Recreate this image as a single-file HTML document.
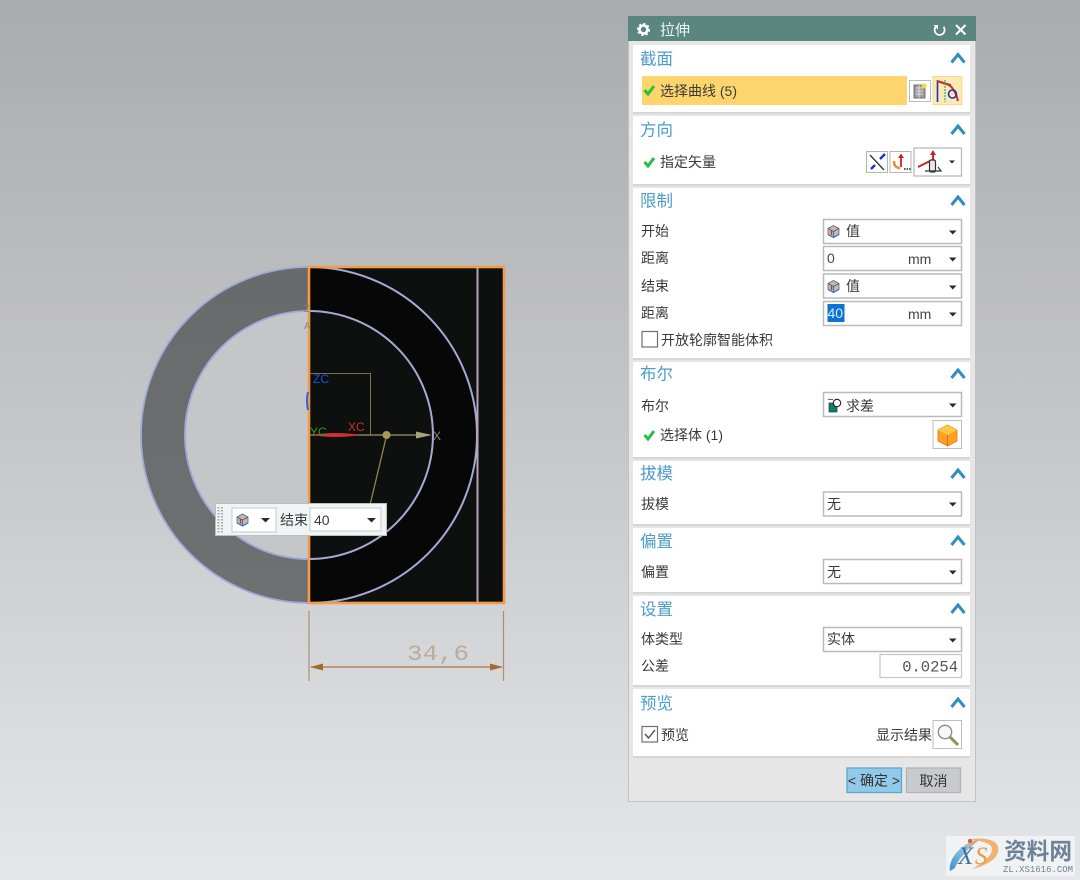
<!DOCTYPE html>
<html><head><meta charset="utf-8">
<style>
html,body{margin:0;padding:0;width:1080px;height:880px;overflow:hidden}
svg{display:block;filter:blur(.35px)}
text{font-family:"Liberation Sans","Noto Sans CJK SC",sans-serif}
.h{font-size:16.500px;fill:#4d9cc9}
.l{font-size:14px;fill:#3a3a3a}
.v{font-size:14px;fill:#3a3a3a}
.dd{fill:#fff;stroke:#b9bbbb;stroke-width:1.5}
.ar{fill:#2a2a2a}
.sec{fill:#fff}
.sh{fill:#d6d6d6}
.ch{fill:none;stroke:#2f8fc0;stroke-width:3}
.ck{fill:none;stroke:#28c040;stroke-width:3}
</style></head><body>
<svg width="1080" height="880" viewBox="0 0 1080 880" xmlns="http://www.w3.org/2000/svg">
<defs>
<linearGradient id="bg" x1="0" y1="0" x2="0" y2="1"><stop offset="0" stop-color="#aaabad"/><stop offset="0.5" stop-color="#c6c7ca"/><stop offset="1" stop-color="#e4e6e9"/></linearGradient>
<linearGradient id="ring" x1="0" y1="0" x2="0" y2="1"><stop offset="0" stop-color="#686a6b"/><stop offset="1" stop-color="#6f7072"/></linearGradient>
<linearGradient id="lg" x1="0" y1="1" x2="1" y2="0"><stop offset="0" stop-color="#3f8fd0"/><stop offset="0.6" stop-color="#8fc4e4"/><stop offset="1" stop-color="#f0a050"/></linearGradient>
<g id="cube"><path d="M0 3.500L5.500 0.500L11 3.500V9.500L5.500 12.500L0 9.500Z" fill="#b9bbbd" stroke="#666" stroke-width=".8"/><path d="M0 3.500L5.500 6.500L11 3.500M5.500 6.500V12.500" fill="none" stroke="#555" stroke-width=".8"/><path d="M0 9.500L5.500 12.500L11 9.500" fill="none" stroke="#3a70d0" stroke-width="1.200"/><path d="M3.500 6V10" stroke="#d03030" stroke-width="1.300"/></g>
</defs>
<rect width="1080" height="880" fill="url(#bg)"/>

<!-- left half ring -->
<path d="M309 267A168 168 0 0 0 309 603V559A124 124 0 0 1 309 311Z" fill="url(#ring)" stroke="#a0a8d8" stroke-width="1.800"/>
<path d="M309 311A124 124 0 0 0 309 559Z" fill="#c5c6c9"/>
<path d="M309 311A124 124 0 0 0 309 559" fill="none" stroke="#a0a8d8" stroke-width="1.800"/>
<!-- black rect -->
<rect x="309" y="267" width="195" height="336" fill="#0e0f0f"/>
<path d="M309 267A168 168 0 0 1 309 603Z" fill="#070707"/>
<path d="M309 311A124 124 0 0 1 309 559Z" fill="#0e1010"/>
<path d="M309 267A168 168 0 0 1 309 603" fill="none" stroke="#a6a9d4" stroke-width="2"/>
<path d="M309 311A124 124 0 0 1 309 559" fill="none" stroke="#a6a9d4" stroke-width="2"/>
<line x1="477.500" y1="268" x2="477.500" y2="603" stroke="#b8a4b8" stroke-width="2"/>
<rect x="309" y="267" width="195" height="336" fill="none" stroke="#f39c48" stroke-width="2.600"/>
<!-- axes -->
<path d="M310 373.500H370.500V435" fill="none" stroke="#77714f" stroke-width="1"/>
<line x1="310" y1="435" x2="420" y2="435" stroke="#857e58" stroke-width="1.500"/>
<path d="M416 431.500L432 435L416 438.500Z" fill="#a8a27a"/>
<path d="M312 435Q335 431 360 435Q335 439 312 435Z" fill="#d03030"/>
<circle cx="386.500" cy="435" r="4" fill="#a99a50"/>
<line x1="386" y1="438" x2="370" y2="505" stroke="#8f8450" stroke-width="1.300"/>
<path d="M308 392Q306 400 308 410" fill="none" stroke="#3060d8" stroke-width="2"/>
<text x="313" y="383" font-size="12" fill="#1a50e0">ZC</text>
<text x="310" y="436" font-size="12" fill="#2a9a30">YC</text>
<text x="348" y="431" font-size="12" fill="#c83030">XC</text>
<text x="433" y="440" font-size="12" fill="#8a8566">X</text>
<text x="304" y="312" font-size="10" fill="#8a8a70">Z</text>
<text x="304" y="329" font-size="10" fill="#8a8a70">A</text>

<!-- floating toolbar -->
<rect x="215.500" y="503.500" width="171" height="32" fill="#eff4f4" stroke="#bcbebe"/>
<path d="M218.500 507V534M222 507V534" stroke="#aaa" stroke-width="2" stroke-dasharray="1.500 1.500"/>
<rect x="232" y="508" width="44" height="24" fill="#fff" stroke="#c6c8c8"/>
<use href="#cube" x="237" y="513.500"/>
<path d="M261 518H270L265.500 522.500Z" class="ar"/>
<text x="280" y="525" class="v">结束</text>
<rect x="310" y="508" width="71" height="23" fill="#fff" stroke="#c6c8c8"/>
<text x="314" y="525" font-size="14" fill="#3a3a3a">40</text>
<path d="M367 518H376L371.500 522.500Z" class="ar"/>

<!-- dimension -->
<g stroke="#b08f6f" stroke-width="1.200" fill="none"><line x1="309" y1="611" x2="309" y2="681"/><line x1="503.500" y1="611" x2="503.500" y2="681"/></g>
<line x1="311" y1="667" x2="502" y2="667" stroke="#a87a48" stroke-width="1.300"/>
<path d="M310 667L323 663.500V670.500Z" fill="#a06a30"/><path d="M503 667L490 663.500V670.500Z" fill="#a06a30"/>
<text x="407" y="660" style="font-family:'Liberation Mono',monospace" font-size="22" fill="#bcab9c" textLength="62" lengthAdjust="spacingAndGlyphs">34,6</text>

<!-- dialog -->
<rect x="628.500" y="16.500" width="347" height="785" fill="#e6e6e6" stroke="#c2c2c2"/>
<rect x="628" y="16" width="348" height="25" fill="#5b8680"/>
<g transform="translate(643.500 29.500)"><circle r="4" fill="none" stroke="#fff" stroke-width="2.600"/><circle r="5.700" fill="none" stroke="#fff" stroke-width="1.700" stroke-dasharray="2.200 2.200"/></g>
<text x="660" y="35" font-size="15" fill="#eef4f3">拉伸</text>
<path d="M936 26.500A5 5 0 1 0 943.500 26.800" fill="none" stroke="#fff" stroke-width="1.700"/><path d="M933.500 25H938V29.500Z" fill="#fff"/>
<path d="M956 25L965.500 34.500M965.500 25L956 34.500" stroke="#fff" stroke-width="2"/>

<!-- sections -->
<g class="sh"><rect x="633" y="112" width="337" height="2"/><rect x="633" y="184" width="337" height="2"/><rect x="633" y="358" width="337" height="2"/><rect x="633" y="457" width="337" height="2"/><rect x="633" y="524" width="337" height="2"/><rect x="633" y="592" width="337" height="2"/><rect x="633" y="685" width="337" height="2"/><rect x="633" y="756" width="337" height="2"/></g>
<rect class="sec" x="633" y="45" width="337" height="67"/>
<rect class="sec" x="633" y="116" width="337" height="68"/>
<rect class="sec" x="633" y="188" width="337" height="170"/>
<rect class="sec" x="633" y="362" width="337" height="95"/>
<rect class="sec" x="633" y="461" width="337" height="63"/>
<rect class="sec" x="633" y="528" width="337" height="64"/>
<rect class="sec" x="633" y="596" width="337" height="89"/>
<rect class="sec" x="633" y="689" width="337" height="67"/>

<text class="h" x="640" y="64.500">截面</text><text class="h" x="640" y="135.500">方向</text><text class="h" x="640" y="206.500">限制</text><text class="h" x="640" y="379.500">布尔</text><text class="h" x="640" y="479">拔模</text><text class="h" x="640" y="547">偏置</text><text class="h" x="640" y="615">设置</text><text class="h" x="640" y="709">预览</text>
<g class="ch"><path d="M951.500 62.500L958 54.500L964.500 62.500"/><path d="M951.500 134L958 126L964.500 134"/><path d="M951.500 205L958 197L964.500 205"/><path d="M951.500 378L958 370L964.500 378"/><path d="M951.500 478L958 470L964.500 478"/><path d="M951.500 545L958 537L964.500 545"/><path d="M951.500 613L958 605L964.500 613"/><path d="M951.500 707L958 699L964.500 707"/></g>

<!-- 截面 -->
<rect x="642" y="76" width="265" height="29" fill="#fdd56c"/>
<path class="ck" d="M644.500 90L648 94L654 86"/>
<text class="l" x="660" y="96">选择曲线 (5)</text>
<rect x="909.500" y="80.500" width="21" height="21" fill="#fff" stroke="#bbb"/>
<rect x="914" y="85" width="11" height="13" fill="#9a9f9f" stroke="#555" stroke-width=".8"/><path d="M916 88H923M916 91H923M916 94H923M919 85V98" stroke="#eee" stroke-width=".8"/><circle cx="924" cy="86" r="2.500" fill="#f0d840"/>
<rect x="933" y="76.500" width="29" height="28" fill="#fbeab4" stroke="#fcd98a"/>
<path d="M937.500 102V81L951 85" fill="none" stroke="#2030c0" stroke-width="1.600"/>
<path d="M937 81L949 85Q955 89 958 101" fill="none" stroke="#d03030" stroke-width="2"/>
<line x1="945" y1="80" x2="945" y2="102" stroke="#40a080" stroke-width="1.200" stroke-dasharray="2 1"/>
<circle cx="952.500" cy="94" r="4" fill="none" stroke="#2030c0" stroke-width="1.600"/>

<!-- 方向 -->
<path class="ck" d="M644.500 162L648 166L654 158"/>
<text class="l" x="660" y="167">指定矢量</text>
<rect x="866.500" y="151.500" width="21" height="21" fill="#fff" stroke="#b5b5b5"/>
<path d="M870 155L884 170" stroke="#333" stroke-width="1.300"/><path d="M871 169L875 165M880 159L885 154" stroke="#1a30d0" stroke-width="2.400"/>
<rect x="890" y="151.500" width="21" height="21" fill="#fff" stroke="#b5b5b5"/>
<path d="M901 167V157" stroke="#d02020" stroke-width="1.800"/><path d="M898 158L901 153.500L904 158Z" fill="#d02020"/><path d="M894 161Q894 168 900 168" fill="none" stroke="#e88a30" stroke-width="2.400"/><path d="M904 169H911" stroke="#222" stroke-width="1.600" stroke-dasharray="1.500 1"/>
<rect x="914" y="148" width="47.500" height="28" fill="#fff" stroke="#b9bbbb" stroke-width="1.300"/>
<path d="M918 167L930 161" stroke="#d02020" stroke-width="2"/><path d="M933 164V153" stroke="#d02020" stroke-width="2"/><path d="M930 155L933 150L936 155Z" fill="#d02020"/>
<rect x="929.500" y="160" width="6" height="12" rx="1.500" fill="#e8e8e8" stroke="#333" stroke-width="1.200"/><path d="M925 171H941L938 167" fill="none" stroke="#333" stroke-width="1.200"/>
<path class="ar" d="M949 160.500H955L952 163.500Z"/>

<!-- 限制 -->
<text class="l" x="641" y="236">开始</text><text class="l" x="641" y="263">距离</text><text class="l" x="641" y="291">结束</text><text class="l" x="641" y="318">距离</text>
<rect class="dd" x="823.500" y="219.500" width="138" height="24"/><use href="#cube" x="828" y="225"/><text class="v" x="846" y="236">值</text><path class="ar" d="M949 230.500H956.500L952.750 234.500Z"/>
<rect class="dd" x="823.500" y="246.500" width="138" height="24"/><text x="827" y="263" font-size="14" fill="#444">0</text><text x="908" y="264" font-size="14" fill="#444">mm</text><path class="ar" d="M949 257.500H956.500L952.750 261.500Z"/>
<rect class="dd" x="823.500" y="274" width="138" height="24"/><use href="#cube" x="828" y="280"/><text class="v" x="846" y="291">值</text><path class="ar" d="M949 285.500H956.500L952.750 289.500Z"/>
<rect class="dd" x="823.500" y="301.500" width="138" height="24"/><rect x="827.500" y="304" width="17" height="18" fill="#0a74d0"/><text x="827.500" y="318" font-size="14" fill="#d8ecfb">40</text><text x="908" y="319" font-size="14" fill="#444">mm</text><path class="ar" d="M949 312.500H956.500L952.750 316.500Z"/>
<rect x="642" y="331.500" width="15.500" height="15.500" fill="#fff" stroke="#707070" stroke-width="1.200"/>
<text class="l" x="661" y="345">开放轮廓智能体积</text>

<!-- 布尔 -->
<text class="l" x="641" y="411">布尔</text>
<rect class="dd" x="823.500" y="392.500" width="138" height="24"/>
<path d="M828 399.500H833" stroke="#e03030" stroke-width="1"/><rect x="829" y="403" width="8" height="9" fill="#167a6a" stroke="#0b4a40" stroke-width=".7"/><circle cx="837" cy="403" r="3.700" fill="#fff" stroke="#222" stroke-width="1.100"/>
<text class="v" x="846" y="411">求差</text><path class="ar" d="M949 403.500H956.500L952.750 407.500Z"/>
<path class="ck" d="M644.500 435L648 439L654 431"/>
<text class="l" x="660" y="440">选择体 (1)</text>
<rect x="933" y="420.500" width="28.500" height="28" fill="#fff" stroke="#bdbdbd"/>
<path d="M947.500 425L957 430V441L947.500 446L938 441V430Z" fill="#fba31e" stroke="#f07020" stroke-width=".8"/><path d="M938 430L947.500 435L957 430L947.500 425Z" fill="#fdc848"/><path d="M947.500 435V446" stroke="#e86a18" stroke-width="1"/>

<!-- 拔模 / 偏置 / 设置 -->
<text class="l" x="641" y="509">拔模</text><rect class="dd" x="823.500" y="492" width="138" height="24"/><text class="v" x="827" y="509">无</text><path class="ar" d="M949 502.500H956.500L952.750 506.500Z"/>
<text class="l" x="641" y="577">偏置</text><rect class="dd" x="823.500" y="559.500" width="138" height="24"/><text class="v" x="827" y="577">无</text><path class="ar" d="M949 570.500H956.500L952.750 574.500Z"/>
<text class="l" x="641" y="644">体类型</text><rect class="dd" x="823.500" y="627.500" width="138" height="24"/><text class="v" x="827" y="644">实体</text><path class="ar" d="M949 638.500H956.500L952.750 642.500Z"/>
<text class="l" x="641" y="671">公差</text><rect x="880" y="654.500" width="81.500" height="23" fill="#fff" stroke="#c4c6c6" stroke-width="1.200"/>
<text x="958" y="671.500" text-anchor="end" font-size="15.500" fill="#555" style="font-family:'Liberation Mono',monospace">0.0254</text>

<!-- 预览 -->
<rect x="642" y="726.500" width="15.500" height="15.500" fill="#fff" stroke="#707070" stroke-width="1.200"/>
<path d="M645 734L648.500 738L655 730" fill="none" stroke="#555" stroke-width="1.400"/>
<text class="l" x="661" y="740">预览</text>
<text class="l" x="876" y="740">显示结果</text>
<rect x="933" y="720.500" width="28.500" height="28" fill="#fff" stroke="#bdbdbd"/>
<circle cx="945" cy="732" r="6.700" fill="#f4f8fa" stroke="#8a8f92" stroke-width="1.400"/><path d="M950 737L958 745" stroke="#7f9a50" stroke-width="3"/>

<!-- buttons -->
<rect x="847" y="768" width="54.500" height="24.500" fill="#92c9e8" stroke="#58a8d0" stroke-width="1.300"/>
<text x="874" y="785.500" text-anchor="middle" font-size="14" fill="#333">&lt; 确定 &gt;</text>
<rect x="906.500" y="768" width="54" height="24.500" fill="#c9cacd" stroke="#b2b3b5" stroke-width="1.300"/>
<text x="933.500" y="786" text-anchor="middle" font-size="14" fill="#333">取消</text>

<!-- watermark -->
<rect x="946" y="836" width="129" height="40" fill="#f0f2f3"/>
<path d="M950 871C948 860 960 843 980 839C972 846 958 858 955 868Z" fill="url(#lg)"/>
<path d="M967 840C985 836 1001 840 998 852C996 860 985 866 972 869C984 862 992 856 992 849C992 843 980 840 967 840Z" fill="#eea858" opacity=".85"/>
<circle cx="970" cy="841" r="2" fill="#e05040"/>
<text x="958" y="864" font-size="25" font-style="italic" fill="#3f6f9c" style="font-family:'Liberation Serif',serif">X</text>
<text x="975" y="864" font-size="25" font-style="italic" fill="#e89a48" style="font-family:'Liberation Serif',serif">S</text>
<text x="1004" y="859" font-size="23" font-weight="700" fill="#6d8296" style="font-family:'Noto Sans CJK SC',sans-serif" textLength="68" lengthAdjust="spacingAndGlyphs">资料网</text>
<text x="1003" y="872" font-size="9" fill="#6d8296" style="font-family:'Liberation Mono',monospace" textLength="70" lengthAdjust="spacing">ZL.XS1616.COM</text>
</svg>
</body></html>
